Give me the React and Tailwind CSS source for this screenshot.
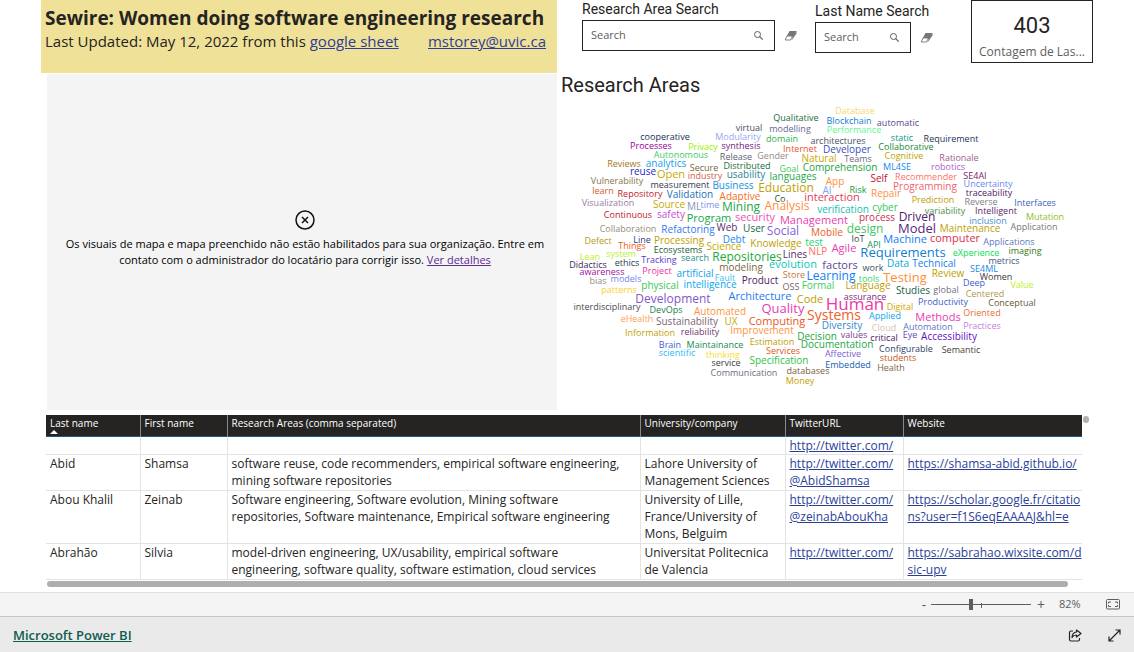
import { useState } from "react";

// [word, center x, baseline, font size, color]
const words = [
  ["Database", 855, 114, 9, "#f8d870"],
  ["Qualitative", 796, 121, 9, "#1a6b3a"],
  ["Blockchain", 849, 124, 9, "#1080d0"],
  ["automatic", 898, 126, 9, "#604890"],
  ["virtual", 749, 131, 9, "#4a4f5e"],
  ["modelling", 790, 132, 9, "#5f6b8f"],
  ["Performance", 854, 133, 9, "#60f890"],
  ["cooperative", 665, 140, 9, "#1a2e5a"],
  ["Modularity", 738, 140, 9, "#98a8f0"],
  ["domain", 782, 142, 9, "#2cb44a"],
  ["static", 902, 141, 9, "#109888"],
  ["Requirement", 951, 142, 9, "#203858"],
  ["architectures", 838, 144, 9, "#4c5464"],
  ["Processes", 651, 149, 9, "#990099"],
  ["Privacy", 703, 150, 9, "#a0f000"],
  ["synthesis", 741, 149, 9, "#702080"],
  ["Internet", 800, 152, 9, "#e8562c"],
  ["Developer", 847, 153, 10, "#3450c0"],
  ["Collaborative", 906, 150, 9, "#208838"],
  ["Autonomous", 681, 158, 9, "#3ccc60"],
  ["Release", 736, 160, 9, "#5c6370"],
  ["Gender", 773, 159, 9, "#988c84"],
  ["Natural", 819, 162, 10, "#c9a800"],
  ["Teams", 858, 162, 9, "#6c6c80"],
  ["Cognitive", 904, 159, 9, "#c0a000"],
  ["Rationale", 959, 161, 9, "#a06088"],
  ["Reviews", 624, 167, 9, "#9e7a22"],
  ["analytics", 666, 167, 10, "#18a0e8"],
  ["Secure", 704, 171, 9, "#7c6436"],
  ["Distributed", 747, 169, 9, "#1a6b3a"],
  ["Goal", 789, 172, 9, "#48c858"],
  ["Comprehension", 840, 171, 10, "#1aa33a"],
  ["ML4SE", 897, 170, 9, "#1888f0"],
  ["robotics", 948, 170, 9, "#b060d0"],
  ["reuse", 643, 175, 10, "#1f1fd0"],
  ["Open", 671, 178, 11, "#c9a800"],
  ["industry", 705, 179, 9, "#d0614a"],
  ["usability", 746, 178, 10, "#2f8590"],
  ["languages", 793, 180, 10, "#1ea84a"],
  ["App", 835, 185, 10, "#ff9038"],
  ["Self", 879, 182, 10, "#c01030"],
  ["Recommender", 926, 180, 9, "#ff7068"],
  ["SE4AI", 975, 179, 9, "#801c68"],
  ["Vulnerability", 617, 184, 9, "#857548"],
  ["measurement", 680, 188, 9, "#333c4a"],
  ["Business", 733, 189, 10, "#1090e0"],
  ["Education", 786, 192, 12, "#c0a000"],
  ["AI", 827, 194, 10, "#80a8f0"],
  ["Risk", 858, 193, 9, "#18a038"],
  ["Programming", 925, 190, 10, "#f06070"],
  ["Uncertainty", 988, 187, 9, "#6888f0"],
  ["learn", 603, 194, 9, "#d06020"],
  ["Repository", 640, 197, 9, "#c02030"],
  ["Validation", 690, 198, 10, "#1a70b8"],
  ["Adaptive", 740, 200, 10, "#f57020"],
  ["Repair", 886, 197, 10, "#ff9040"],
  ["traceability", 989, 196, 9, "#502060"],
  ["Co", 780, 202, 9, "#1a6040"],
  ["interaction", 832, 201, 11, "#e04060"],
  ["Visualization", 608, 206, 9, "#9a7aa8"],
  ["Source", 669, 208, 10, "#c9a800"],
  ["ML", 694, 210, 10, "#8098b8"],
  ["time", 710, 208, 9, "#8090f0"],
  ["Mining", 741, 211, 12, "#1aa848"],
  ["Analysis", 787, 210, 12, "#ff9040"],
  ["Prediction", 933, 203, 9, "#c0a000"],
  ["Reverse", 981, 205, 9, "#808088"],
  ["Interfaces", 1035, 206, 9, "#4060c0"],
  ["Continuous", 628, 218, 9, "#c01828"],
  ["safety", 671, 218, 10, "#c050d0"],
  ["Program", 709, 222, 11, "#1aa848"],
  ["security", 755, 221, 11, "#f050b8"],
  ["Management", 814, 224, 11, "#e840b0"],
  ["verification", 843, 213, 10, "#10c0b0"],
  ["cyber", 885, 211, 10, "#38c460"],
  ["variability", 945, 214, 9, "#4c9048"],
  ["Intelligent", 996, 214, 9, "#582868"],
  ["Mutation", 1045, 220, 9, "#90c028"],
  ["process", 877, 221, 10, "#d03050"],
  ["Driven", 917, 221, 12, "#502070"],
  ["inclusion", 988, 224, 9, "#4090d0"],
  ["Collaboration", 628, 232, 9, "#988c7c"],
  ["Refactoring", 688, 233, 10, "#3078f0"],
  ["Web", 727, 231, 10, "#5c2c70"],
  ["User", 754, 232, 10, "#1a6848"],
  ["Social", 783, 235, 12, "#8860d8"],
  ["Mobile", 827, 236, 10, "#e86020"],
  ["design", 865, 233, 12, "#40c860"],
  ["Model", 917, 233, 13, "#582880"],
  ["Maintenance", 970, 232, 10, "#c0a000"],
  ["Application", 1034, 230, 9, "#787880"],
  ["Defect", 598, 244, 9, "#b89a1c"],
  ["Line", 642, 243, 9, "#2c3c80"],
  ["Processing", 679, 244, 10, "#c0a000"],
  ["Debt", 734, 243, 10, "#2088f8"],
  ["Science", 724, 250, 10, "#c9a800"],
  ["Knowledge", 776, 247, 10, "#c0a000"],
  ["test", 814, 246, 10, "#20d878"],
  ["IoT", 858, 242, 9, "#404048"],
  ["API", 874, 248, 9, "#209058"],
  ["Machine", 905, 243, 11, "#1080f0"],
  ["computer", 955, 242, 11, "#d83048"],
  ["Applications", 1009, 245, 9, "#6078c0"],
  ["Things", 632, 249, 9, "#f05820"],
  ["Ecosystems", 678, 253, 9, "#1a6040"],
  ["Repositories", 747, 261, 12, "#1aa838"],
  ["Lines", 795, 258, 10, "#5c2870"],
  ["NLP", 818, 255, 10, "#ff7060"],
  ["Agile", 844, 252, 11, "#e840b0"],
  ["Requirements", 903, 257, 13, "#1080d0"],
  ["eXperience", 976, 256, 9, "#08e058"],
  ["imaging", 1025, 254, 9, "#387820"],
  ["Lean", 590, 260, 9, "#c0f020"],
  ["system", 621, 257, 9, "#b8f038"],
  ["Tracking", 659, 263, 9, "#5c3cd0"],
  ["search", 695, 261, 9, "#28908c"],
  ["Didactics", 588, 268, 9, "#402850"],
  ["ethics", 627, 266, 9, "#1a4850"],
  ["modeling", 741, 271, 10, "#7c6840"],
  ["evolution", 793, 268, 11, "#08c8b8"],
  ["factors", 840, 269, 11, "#604890"],
  ["work", 873, 271, 9, "#3c4c68"],
  ["Data", 898, 267, 10, "#08a8e0"],
  ["Technical", 934, 267, 10, "#2080f0"],
  ["SE4ML", 984, 272, 9, "#1888e8"],
  ["metrics", 1004, 264, 9, "#485880"],
  ["awareness", 602, 275, 9, "#a010a0"],
  ["Project", 657, 274, 9, "#f030a0"],
  ["artificial", 695, 277, 10, "#10a0e8"],
  ["Fault", 725, 281, 9, "#48c0f8"],
  ["Product", 760, 284, 10, "#502060"],
  ["Store", 794, 278, 9, "#b87840"],
  ["Learning", 831, 280, 12, "#1080f0"],
  ["tools", 869, 282, 9, "#30d870"],
  ["Testing", 905, 282, 13, "#ff9040"],
  ["Review", 948, 277, 10, "#c0a000"],
  ["Women", 996, 280, 9, "#403840"],
  ["bias", 598, 284, 9, "#988c80"],
  ["models", 626, 282, 9, "#7088f0"],
  ["physical", 660, 289, 10, "#38c850"],
  ["intelligence", 710, 288, 10, "#08a8f0"],
  ["OSS", 791, 290, 9, "#80606c"],
  ["Formal", 818, 289, 10, "#38d058"],
  ["Language", 868, 289, 10, "#c0a000"],
  ["Deep", 974, 286, 9, "#4060d0"],
  ["Value", 1022, 288, 9, "#c0f028"],
  ["patterns", 619, 293, 9, "#f8d030"],
  ["Studies", 913, 294, 10, "#186048"],
  ["global", 946, 293, 9, "#707080"],
  ["Centered", 985, 297, 9, "#b09850"],
  ["Development", 673, 303, 12, "#8058c8"],
  ["Architecture", 760, 300, 11, "#2878f0"],
  ["Code", 810, 303, 11, "#c0a000"],
  ["assurance", 865, 300, 9, "#802c80"],
  ["Conceptual", 1012, 306, 9, "#685838"],
  ["interdisciplinary", 607, 310, 9, "#4c4c54"],
  ["DevOps", 666, 313, 9, "#208050"],
  ["Automated", 720, 315, 10, "#ff9440"],
  ["Quality", 783, 313, 13, "#e83cb0"],
  ["Human", 855, 310, 17, "#f038a8"],
  ["Digital", 900, 310, 9, "#d0a800"],
  ["Productivity", 943, 305, 9, "#4060c8"],
  ["eHealth", 637, 322, 9, "#ffa050"],
  ["Sustainability", 687, 325, 10, "#7c6470"],
  ["UX", 731, 325, 10, "#c8a800"],
  ["Computing", 777, 325, 11, "#e85820"],
  ["Systems", 834, 320, 14, "#f06028"],
  ["Applied", 885, 319, 9, "#08a8f0"],
  ["Methods", 938, 321, 11, "#e83cb0"],
  ["Oriented", 982, 316, 9, "#e87030"],
  ["Information", 650, 336, 9, "#c0a000"],
  ["reliability", 700, 335, 9, "#703470"],
  ["Improvement", 762, 334, 10, "#ff9440"],
  ["Diversity", 842, 329, 10, "#3088d0"],
  ["Cloud", 884, 331, 9, "#d8c4b4"],
  ["Automation", 928, 330, 9, "#6078c0"],
  ["Practices", 982, 329, 9, "#c880e0"],
  ["Brain", 670, 348, 9, "#3c60d8"],
  ["Maintainance", 715, 348, 9, "#208850"],
  ["Estimation", 772, 345, 9, "#c0a000"],
  ["Decision", 817, 340, 10, "#1aa838"],
  ["values", 854, 338, 9, "#803c98"],
  ["critical", 884, 341, 9, "#502060"],
  ["Eye", 910, 338, 9, "#6048b8"],
  ["Accessibility", 949, 340, 10, "#6010c8"],
  ["scientific", 677, 356, 9, "#30b8f8"],
  ["thinking", 723, 358, 9, "#f8dc38"],
  ["Services", 783, 354, 9, "#e05820"],
  ["Documentation", 837, 348, 10, "#1aa848"],
  ["Affective", 843, 357, 9, "#7860d0"],
  ["Configurable", 906, 352, 9, "#304068"],
  ["Semantic", 961, 353, 9, "#484438"],
  ["service", 726, 366, 9, "#403c44"],
  ["Specification", 779, 364, 10, "#30c048"],
  ["Embedded", 848, 368, 9, "#1060b0"],
  ["students", 898, 361, 9, "#c85820"],
  ["Health", 891, 371, 9, "#806448"],
  ["Communication", 744, 376, 9, "#706c80"],
  ["databases", 808, 374, 9, "#785c3c"],
  ["Money", 800, 384, 9, "#c8a000"],
];

const columns = [
  "Last name",
  "First name",
  "Research Areas (comma separated)",
  "University/company",
  "TwitterURL",
  "Website",
];

const rows = [
  { last: "", first: "", areas: "", university: "", twitter: ["http://twitter.com/"], website: [] },
  {
    last: "Abid",
    first: "Shamsa",
    areas: "software reuse, code recommenders, empirical software engineering, mining software repositories",
    university: "Lahore University of Management Sciences",
    twitter: ["http://twitter.com/", "@AbidShamsa"],
    website: ["https://shamsa-abid.github.io/"],
  },
  {
    last: "Abou Khalil",
    first: "Zeinab",
    areas:
      "Software engineering, Software evolution, Mining software repositories, Software maintenance, Empirical software engineering",
    university: "University of Lille, France/University of Mons, Belguim",
    twitter: ["http://twitter.com/", "@zeinabAbouKha"],
    website: ["https://scholar.google.fr/citatio", "ns?user=f1S6eqEAAAAJ&hl=e"],
  },
  {
    last: "Abrahão",
    first: "Silvia",
    areas:
      "model-driven engineering, UX/usability, empirical software engineering, software quality, software estimation, cloud services",
    university: "Universitat Politecnica de Valencia",
    twitter: ["http://twitter.com/"],
    website: ["https://sabrahao.wixsite.com/d", "sic-upv"],
  },
];

function SearchBox({ id, label, className }) {
  const [value, setValue] = useState("");

  return (
    <div className={className}>
      <label htmlFor={id} className="block whitespace-nowrap font-[Roboto,sans-serif] text-sm leading-[18px]">
        {label}
      </label>
      <div className="mt-0.5 flex items-center">
        <div className="flex h-[31px] min-w-0 flex-1 items-center border border-[#252423] px-2">
          <input
            id={id}
            type="text"
            placeholder="Search"
            value={value}
            onChange={(event) => setValue(event.target.value)}
            className="w-full min-w-0 flex-1 bg-transparent text-[11px] outline-none placeholder:text-[#605e5c]"
          />
          <button type="button" aria-label="Search" className="mr-0.5 shrink-0">
            <svg width="11" height="11" viewBox="0 0 11 11" fill="none" stroke="#605e5c">
              <circle cx="4.5" cy="4.5" r="3" />
              <path d="M6.7 6.7l3 3" strokeWidth="1.2" />
            </svg>
          </button>
        </div>
        <button type="button" aria-label="Clear" className="ml-[9px] shrink-0" onClick={() => setValue("")}>
          <svg width="14" height="12" viewBox="0 0 14 12">
            <path d="M5.5 1h7L9 6.5H2.5z" fill="#777" />
            <path d="M3 6h5.5l-2 4H1.2z" fill="#fff" stroke="#777" strokeWidth="0.9" />
            <path d="M12.5 1v2.5L7.5 10.5l1.2-4.5z" fill="#777" />
          </svg>
        </button>
      </div>
    </div>
  );
}

function WordCloud() {
  return (
    <svg viewBox="557 100 577 310" className="block w-full" role="img" aria-label="Research Areas">
      {words.map(([text, x, y, size, color]) => (
        <text key={text} x={x} y={y} fontSize={size} fill={color} textAnchor="middle">
          {text}
        </text>
      ))}
    </svg>
  );
}

function CellLink({ lines }) {
  if (!lines.length) return null;
  return (
    <a href={lines.join("")} className="whitespace-nowrap text-[#2b3f99] underline">
      {lines.map((line, index) => (
        <span key={line}>
          {index > 0 && <br />}
          {line}
        </span>
      ))}
    </a>
  );
}

function ResearchersTable() {
  return (
    <div className="ml-[46px] mr-[45px] mt-[5px]">
      <div className="flex items-start">
        <div className="h-[166px] min-w-0 flex-1 overflow-hidden">
          <table className="w-full table-fixed border-collapse text-left">
            <colgroup>
              <col className="w-[94px]" />
              <col className="w-[87px]" />
              <col className="w-[413px]" />
              <col className="w-[145px]" />
              <col className="w-[118px]" />
              <col />
            </colgroup>
            <thead>
              <tr className="h-[21px] border-b border-[#1d5a8c] bg-[#252423] text-[10px] leading-[14px] text-white">
                {columns.map((name, index) => (
                  <th key={name} className="border-r border-[#8a8886] px-1 pt-px align-top font-normal last:border-r-0">
                    <div className="relative whitespace-nowrap">
                      {name}
                      {index === 0 && (
                        <svg width="8" height="4" viewBox="0 0 8 4" className="absolute left-0 top-[14px]">
                          <path d="M0 4l4-4 4 4z" fill="#fff" />
                        </svg>
                      )}
                    </div>
                  </th>
                ))}
              </tr>
            </thead>
            <tbody className="text-xs leading-[17px] text-[#252423]">
              {rows.map((row) => (
                <tr
                  key={row.last}
                  className="border-b border-[#e3e3e3] align-top [&>td]:border-r [&>td]:border-[#e3e3e3] [&>td]:px-1 [&>td]:pb-px first:[&>td]:pb-0 [&>td:last-child]:border-r-0"
                >
                  <td>{row.last}</td>
                  <td>{row.first}</td>
                  <td>
                    <div className="pr-2">{row.areas}</div>
                  </td>
                  <td>{row.university}</td>
                  <td>
                    <CellLink lines={row.twitter} />
                  </td>
                  <td>
                    <CellLink lines={row.website} />
                  </td>
                </tr>
              ))}
            </tbody>
          </table>
        </div>
        <div className="ml-px mt-px h-[7px] w-1.5 rounded-full bg-[#b3b0ad]" />
      </div>
      <div className="ml-px mr-[21px] h-1.5 rounded-full bg-[#b0aeac]" />
    </div>
  );
}

function ZoomBar() {
  const [zoom, setZoom] = useState(40);

  return (
    <div className="flex h-6 items-center justify-end border-t border-[#e1dfdd] bg-[#f4f4f4] pr-3.5 text-[#605e5c]">
      <button type="button" aria-label="Zoom out" className="w-2.5 text-sm leading-none" onClick={() => setZoom(zoom - 5)}>
        -
      </button>
      <div className="relative ml-0.5 flex w-[100px] items-center">
        <input
          type="range"
          aria-label="Zoom"
          min="0"
          max="100"
          value={zoom}
          onChange={(event) => setZoom(Number(event.target.value))}
          className="h-3 w-full appearance-none bg-[linear-gradient(#605e5c,#605e5c)] bg-[length:100%_1px] bg-center bg-no-repeat [&::-webkit-slider-thumb]:h-[11px] [&::-webkit-slider-thumb]:w-1 [&::-webkit-slider-thumb]:appearance-none [&::-webkit-slider-thumb]:bg-[#605e5c]"
        />
        <span className="pointer-events-none absolute left-1/2 top-1 h-[5px] w-px bg-[#605e5c]" />
      </div>
      <button type="button" aria-label="Zoom in" className="ml-1 w-3 text-sm leading-none" onClick={() => setZoom(zoom + 5)}>
        +
      </button>
      <span className="ml-3 w-[23px] text-[11px]">82%</span>
      <button type="button" aria-label="Fit to page" className="ml-6">
        <svg width="14" height="11" viewBox="0 0 14 11" fill="none" stroke="#605e5c">
          <rect x="0.5" y="0.5" width="13" height="9.5" rx="1" />
          <path d="M5 3H2.5v1.5M2.5 6v1.5H5M9 3h2.5v1.5M11.5 6v1.5H9" />
        </svg>
      </button>
    </div>
  );
}

function Footer() {
  return (
    <footer className="flex h-9 items-center justify-between border-t border-[#c8c6c4] bg-[#eaeaea] px-[13px] pt-0.5">
      <a href="https://powerbi.microsoft.com" className="text-[13px] font-semibold text-[#0f5c50] underline">
        Microsoft Power BI
      </a>
      <div className="flex items-center gap-[26px]">
        <button type="button" aria-label="Share">
          <svg width="14" height="13" viewBox="0 0 14 13" fill="none" stroke="#252423" strokeWidth="1.2">
            <path d="M5 2H3Q1.5 2 1.5 3.5v7Q1.5 12 3 12h7q1.5 0 1.5-1.5V9" />
            <path d="M8.5 1l4.500 3.5-4.500 3.5V6Q5.5 6 4 8.5 4.3 3.5 8.5 3z" strokeLinejoin="round" />
          </svg>
        </button>
        <button type="button" aria-label="Full screen">
          <svg width="13" height="13" viewBox="0 0 13 13" fill="none" stroke="#252423" strokeWidth="1.2">
            <path d="M1 12L12 1M7.5 1H12v4.5M1 7.5V12h4.5" />
          </svg>
        </button>
      </div>
    </footer>
  );
}

export default function App() {
  return (
    <div className="min-h-screen bg-[#eaeaea] font-['Open_Sans','Noto_Sans',sans-serif] text-[#252423]">
      <main className="bg-white pb-[5px]">
        <div className="grid grid-cols-[516fr_577fr] pl-[41px]">
          <div className="flex flex-col">
            <header className="h-[73px] bg-[#f0e199] pl-1 pr-[11px] pt-1.5">
              <h1 className="whitespace-nowrap text-[19px] font-bold leading-6">
                Sewire: Women doing software engineering research
              </h1>
              <div className="flex justify-between whitespace-nowrap text-[15px] leading-[22px]">
                <p>
                  Last Updated: May 12, 2022 from this{" "}
                  <a href="#sheet" className="text-[#2b3f99] underline">
                    google sheet
                  </a>
                </p>
                <a href="mailto:mstorey@uvic.ca" className="text-[#2b3f99] underline">
                  mstorey@uvic.ca
                </a>
              </div>
            </header>
            <section className="ml-1.5 mt-px flex flex-1 flex-col items-center justify-center bg-[#f4f4f4] pb-1.5 pl-4 pr-2.5 text-center text-[11px] leading-4 text-black">
              <svg width="20" height="20" viewBox="0 0 20 20" fill="none" stroke="#111" strokeWidth="1.5">
                <circle cx="10" cy="10" r="9" />
                <path d="M7 7l6 6M13 7l-6 6" />
              </svg>
              <p className="mt-1.5">
                Os visuais de mapa e mapa preenchido não estão habilitados para sua organização. Entre em contato com o
                administrador do locatário para corrigir isso.{" "}
                <a href="#details" className="text-[#5c2d91] underline">
                  Ver detalhes
                </a>
              </p>
            </section>
          </div>

          <div>
            <div className="flex h-[73px] items-start pl-[25px] pr-[41px]">
              <SearchBox id="area-search" label="Research Area Search" className="w-[216px]" />
              <SearchBox id="name-search" label="Last Name Search" className="ml-[17px] mt-0.5 w-[119px]" />
              <div className="ml-auto flex h-[63px] w-[122px] flex-col items-center border border-[#252423] pt-[11px]">
                <span className="font-[Roboto,sans-serif] text-[22px] leading-7">403</span>
                <span className="text-xs leading-6 text-[#605e5c]">Contagem de Las...</span>
              </div>
            </div>
            <h2 className="h-[27px] pl-1 font-[Roboto,sans-serif] text-xl leading-6">Research Areas</h2>
            <WordCloud />
          </div>
        </div>

        <ResearchersTable />
      </main>
      <ZoomBar />
      <Footer />
    </div>
  );
}
